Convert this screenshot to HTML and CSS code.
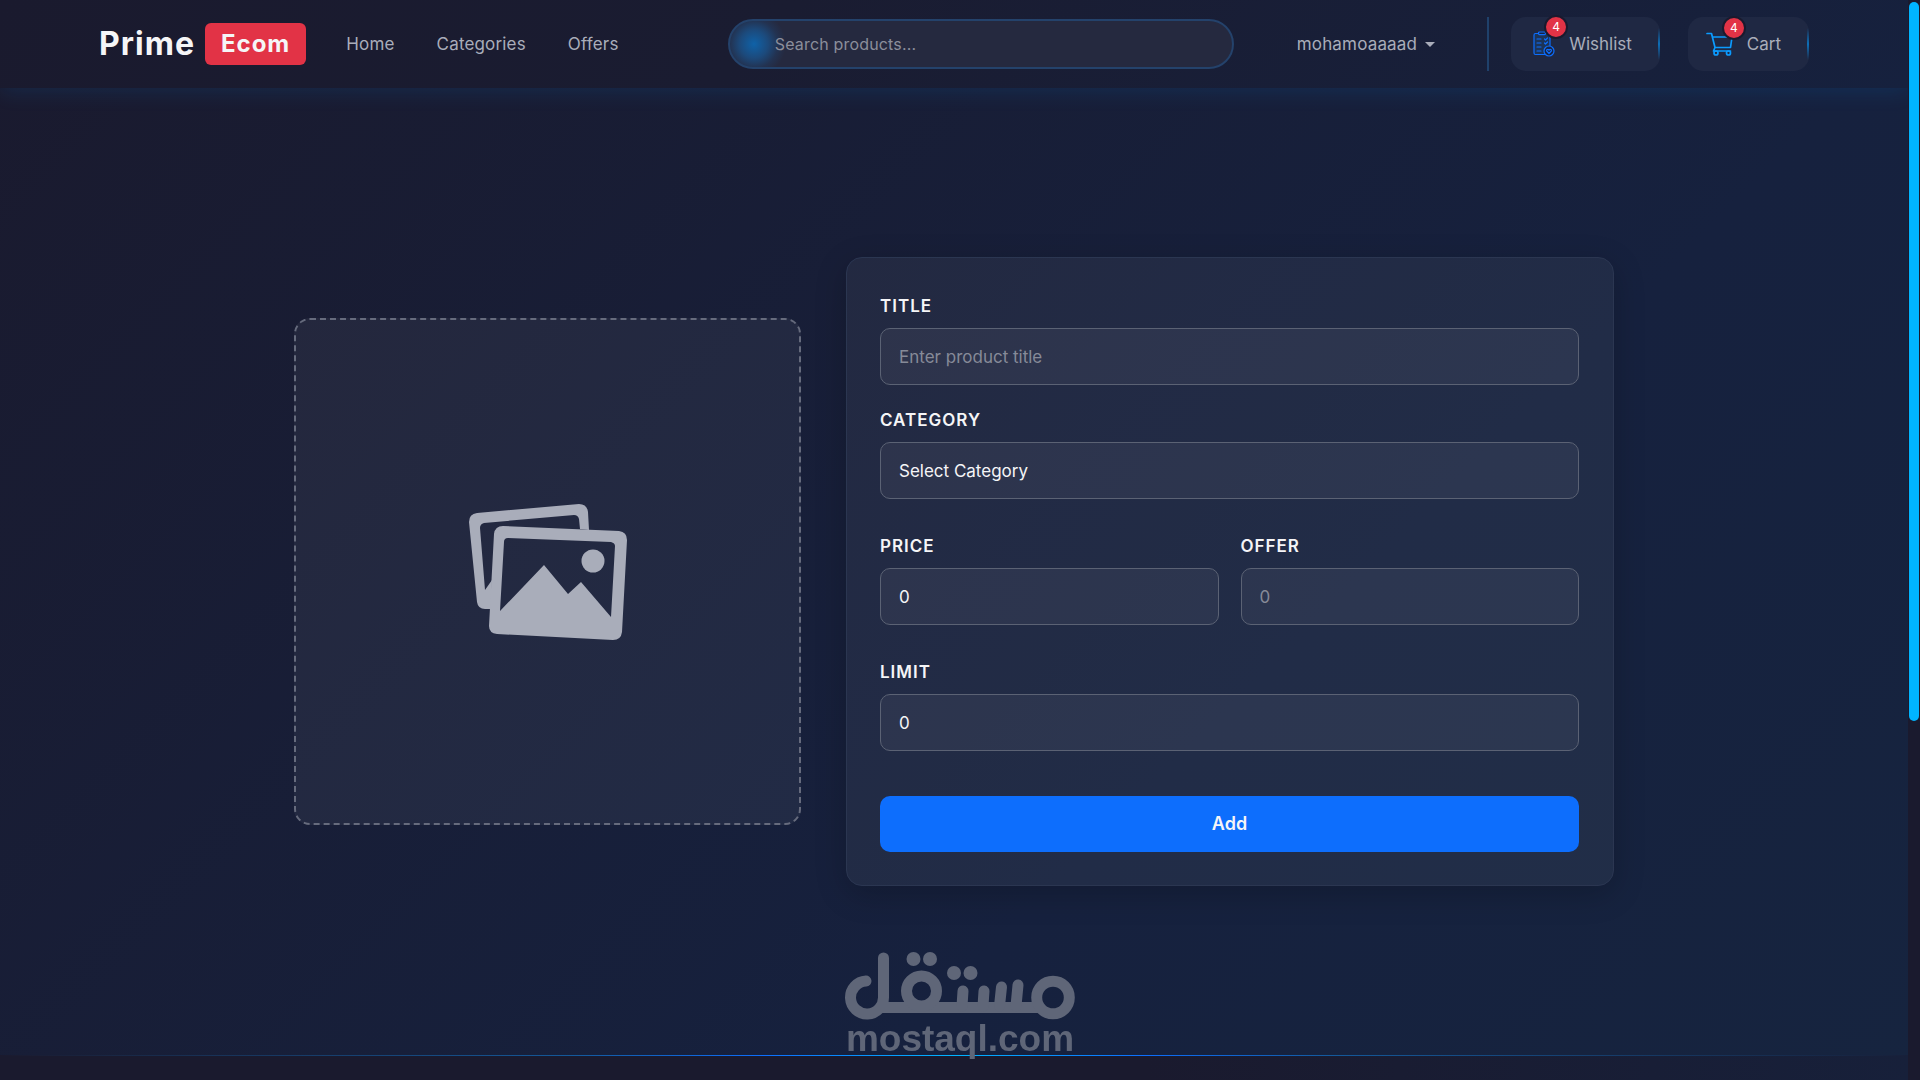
FILE: index.html
```html
<!DOCTYPE html>
<html lang="en">
<head>
<meta charset="utf-8">
<meta name="viewport" content="width=device-width, initial-scale=1">
<title>Prime Ecom</title>
<link rel="stylesheet" href="styles.css">
</head>
<body>
<div class="page">
  <header class="navbar">
    <a class="brand" href="#"><span>Prime</span><span class="brand-tag">Ecom</span></a>
    <nav class="nav-links">
      <a href="#">Home</a>
      <a href="#">Categories</a>
      <a href="#">Offers</a>
    </nav>
    <form class="search">
      <input class="search-input" type="search" placeholder="Search products..." aria-label="Search products">
    </form>
    <button class="user-menu" type="button">mohamoaaaad<span class="caret"></span></button>
    <div class="actions">
      <a class="action" href="#">
        <span class="action-icon">
          <svg class="icon-list" viewBox="0 0 22 26" fill="none" stroke="#0d6efd" stroke-width="1.200" stroke-linecap="round" stroke-linejoin="round" aria-hidden="true">
            <rect x="1" y="2.500" width="16" height="21" rx="1.500" fill="#17538c" fill-opacity=".3"/>
            <rect x="5.500" y="1" width="7" height="2.600" rx="1" fill="#182340"/>
            <path d="M4 8h4M4 12h4M4 16h4M4 20h4M11.500 8l1 1 2-2M11.500 12l1 1 2-2"/>
            <circle cx="16" cy="20" r="5" fill="#182340"/>
            <path d="M16 22.500l-2.300-2.500c-.6-1.500 1.300-2.200 2.300-.8 1-1.400 2.900-.7 2.300.8z"/>
          </svg>
          <span class="badge">4</span>
        </span>
        <span>Wishlist</span>
      </a>
      <a class="action" href="#">
        <span class="action-icon">
          <svg class="icon-cart" viewBox="0 0 27 24" fill="none" stroke="#0b9bff" stroke-width="1.700" stroke-linecap="round" stroke-linejoin="round" aria-hidden="true">
            <path d="M1 1.500h4.500L9 15.500h15.500L26 5H6.400M9 15.500l-1.500 3.500h17"/>
            <circle cx="10" cy="21" r="2"/>
            <circle cx="22.500" cy="21" r="2"/>
          </svg>
          <span class="badge">4</span>
        </span>
        <span>Cart</span>
      </a>
    </div>
  </header>

  <main class="content">
    <div class="upload">
      <svg class="upload-icon" viewBox="0 0 158 136" aria-label="Product images">
        <path fill="#a9adba" fill-rule="evenodd" d="M8 9L110 0q8 0 9 8l1 18-9-1-1-10q-1-4-5-4L15 19q-4 1-4 5l5 62 7-10-1 29H16q-7 0-8-7L0 18q0-8 8-9z"/>
        <path fill="#a9adba" fill-rule="evenodd" d="M34 22l116 5q8 1 8 9l-5 92q-1 8-9 8l-116-6q-8-1-8-8l5-92q1-8 9-8zM39 34q-4 0-4 4l-4 69 44-46 24 29 13-12 30 35 4-71q0-3-4-4z"/>
        <circle cx="124" cy="57" r="11.500" fill="#a9adba"/>
      </svg>
    </div>
    <form class="card">
      <div class="field">
        <label for="title">TITLE</label>
        <input class="control" id="title" type="text" placeholder="Enter product title">
      </div>
      <div class="field">
        <label for="category">CATEGORY</label>
        <select class="control" id="category"><option>Select Category</option></select>
      </div>
      <div class="field-row">
        <div class="field">
          <label for="price">PRICE</label>
          <input class="control" id="price" type="text" inputmode="numeric" value="0">
        </div>
        <div class="field">
          <label for="offer">OFFER</label>
          <input class="control" id="offer" type="text" inputmode="numeric" placeholder="0">
        </div>
      </div>
      <div class="field field-last">
        <label for="limit">LIMIT</label>
        <input class="control" id="limit" type="text" inputmode="numeric" value="0">
      </div>
      <button class="submit" type="button">Add</button>
    </form>
  </main>

  <footer class="footer"></footer>
</div>
<div class="scroll-track"><div class="scroll-thumb"></div></div>

<div class="watermark">
  <svg class="watermark-logo" viewBox="0 0 230 68" fill="none" stroke="#5f6678" stroke-width="11" stroke-linecap="round" aria-label="مستقل">
    <path d="M21 29A16.500 16.500 0 1 0 38.500 45V6"/>
    <path d="M32 55.500H197" stroke-linecap="butt"/>
    <circle cx="76.500" cy="39" r="15"/>
    <circle cx="208" cy="45.500" r="16.300"/>
    <path d="M117 54l1-15M138 54l1-15M154.500 54l2-19M171 54l2-21"/>
    <g fill="#5f6678" stroke="none">
      <circle cx="68.500" cy="7" r="7"/><circle cx="85" cy="7" r="7"/>
      <circle cx="109" cy="21" r="7"/><circle cx="125.500" cy="21" r="7"/>
    </g>
  </svg>
  <span>mostaql.com</span>
</div>
</body>
</html>
```
FILE: styles.css
```css
* { box-sizing: border-box; }

body {
  margin: 0;
  min-height: 100vh;
  display: grid;
  grid-template-columns: 1fr 12px;
  background: #1a1a2e;
  color: #f5f5f7;
  font: 17px/28px Inter, sans-serif;
}

a { color: inherit; text-decoration: none; }
button, input, select { font: inherit; color: inherit; letter-spacing: inherit; }

.page {
  display: flex;
  flex-direction: column;
  background: linear-gradient(135deg, #1a1a2e 0%, #16213e 65%, #16243f 100%);
}

/* Header */
.navbar {
  display: flex;
  align-items: center;
  height: 88px;
  padding: 0 99px;
  background: linear-gradient(135deg, #1a1a2e 0%, #1a1c31 40%, #16213e 100%);
  box-shadow: 0 4px 20px rgba(0, 150, 255, .12);
  color: #a9adba;
  letter-spacing: .01em;
}
.brand {
  display: flex;
  align-items: center;
  gap: 10px;
  color: #f5f5f7;
  font-size: 32px;
  font-weight: 700;
  letter-spacing: 1px;
}
.brand-tag {
  padding: 7px 16px;
  border-radius: 6px;
  background: #e23346;
  font-size: 24px;
}
.nav-links {
  display: flex;
  gap: 42px;
  margin-left: 40px;
}
.search {
  width: 506px;
  margin-left: auto;
}
.search-input {
  display: block;
  width: 100%;
  height: 50px;
  padding: 0 45px;
  border: 2px solid #24426b;
  border-radius: 25px;
  outline: 0;
  background: radial-gradient(circle at 24px 50%, #0f62a8 0, #1c4a7c 14px, rgba(32, 60, 100, .5) 24px, transparent 32px), #25293f;
  font-size: 16px;
}
.search-input::placeholder { color: #8b8e9b; opacity: 1; }
.user-menu {
  display: flex;
  align-items: center;
  gap: 8px;
  margin-left: 63px;
  padding: 0;
  border: 0;
  background: none;
}
.caret {
  border: 5px solid transparent;
  border-top-color: #a9adba;
  border-bottom: 0;
}
.actions {
  display: flex;
  gap: 28px;
  margin-left: 52px;
  padding-left: 22px;
  border-left: 2px solid #1f416b;
  letter-spacing: 0;
}
.action {
  display: flex;
  align-items: center;
  gap: 14px;
  height: 54px;
  padding: 0 28px 0 18px;
  border-radius: 15px;
  background:
    linear-gradient(transparent, #0d6fb8, transparent) right center / 2px 32px no-repeat,
    #1f2843;
}
.action-icon { position: relative; display: flex; }
.icon-list { width: 22px; height: 26px; margin-left: 4px; }
.icon-cart { width: 27px; height: 24px; }
.badge {
  position: absolute;
  top: -16px;
  right: -13px;
  width: 24px;
  height: 24px;
  border: 2px solid #1a1a2e;
  border-radius: 50%;
  background: #e23346;
  color: #fff;
  font-size: 12px;
  line-height: 20px;
  text-align: center;
}

/* Product form */
.content {
  flex: 1;
  display: grid;
  grid-template-columns: 507fr 768fr;
  gap: 45px;
  align-items: center;
  width: 100%;
  max-width: 1320px;
  margin: 0 auto;
}
.upload {
  display: flex;
  align-items: center;
  justify-content: center;
  aspect-ratio: 1;
  border: 2px dashed #666b7d;
  border-radius: 16px;
  background: rgba(255, 255, 255, .05);
}
.upload-icon { width: 158px; }
.card {
  padding: 34px 34px 33px 33px;
  border: 1px solid #2b3651;
  border-radius: 16px;
  background: rgba(255, 255, 255, .05);
  box-shadow: 0 8px 32px rgba(0, 0, 0, .2);
}
.field {
  flex: 1;
  display: flex;
  flex-direction: column;
  gap: 8px;
  margin-bottom: 21px;
}
.field label {
  font-weight: 600;
  letter-spacing: 1px;
}
.field-row {
  display: flex;
  gap: 22px;
  margin: 33px 0;
}
.field-row .field { margin: 0; }
.field-last { margin-bottom: 45px; }
.control {
  width: 100%;
  height: 57px;
  padding: 0 18px;
  border: 1px solid #5b6274;
  border-radius: 10px;
  outline: 0;
  background: rgba(255, 255, 255, .05);
  appearance: none;
}
.control::placeholder { color: #868a98; opacity: 1; }
.submit {
  display: block;
  width: 100%;
  height: 56px;
  border: 0;
  border-radius: 10px;
  background: #0d6efd;
  font-size: 18px;
  font-weight: 600;
}

.footer {
  height: 25px;
  border-top: 1px solid;
  border-image: linear-gradient(90deg, transparent, #14599b 30%, #0d6efd 40%, #00b4ff 50%, #0d6efd 60%, #14599b 70%, transparent) 1;
  background: linear-gradient(90deg, #1a1a2e 60%, #17203a);
}

/* Scroll bar */
.scroll-track {
  padding: 2px 1px;
  height: 100vh;
  background: #1a1a2e;
}
.scroll-thumb {
  height: 66.8%;
  border-radius: 5px;
  background: #00b4ff;
}

/* Watermark over the page */
.watermark {
  position: fixed;
  bottom: 23px;
  left: 0;
  right: 0;
  display: flex;
  flex-direction: column;
  align-items: center;
  color: #5f6678;
  font: bold 37px/37px "Liberation Sans", Arial, sans-serif;
  pointer-events: none;
}
.watermark-logo { width: 230px; height: 68px; }
```
